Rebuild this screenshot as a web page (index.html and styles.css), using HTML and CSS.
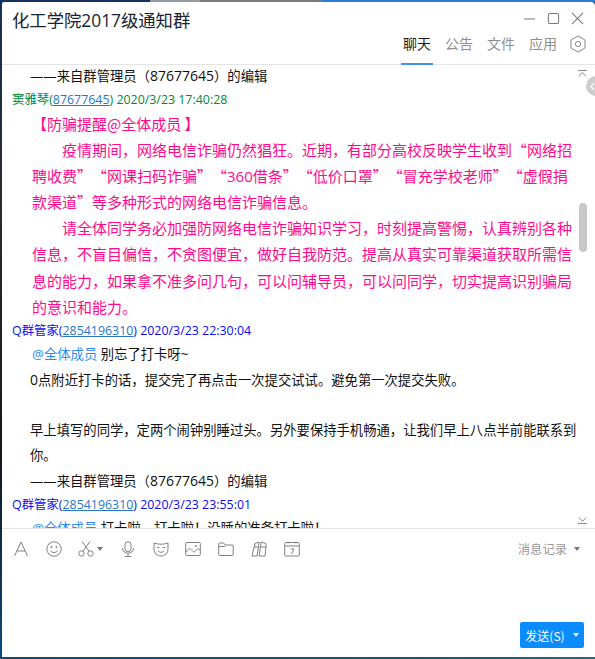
FILE: index.html
```html
<!DOCTYPE html>
<html lang="zh-CN">
<head>
<meta charset="utf-8">
<title>化工学院2017级通知群</title>
<link rel="stylesheet" href="styles.css">
</head>
<body>
<div class="window">
  <header class="head">
    <h1 class="title">化工学院2017级通知群</h1>
    <div class="head-right">
      <div class="winbtns">
        <svg class="wb" viewBox="0 0 14 14"><path d="M1 7.500h12" /></svg>
        <svg class="wb" viewBox="0 0 14 14"><rect x="1.500" y="1.500" width="11" height="11" rx="1.500" /></svg>
        <svg class="wb" viewBox="0 0 14 14"><path d="M1 1l12 12M13 1L1 13" /></svg>
      </div>
      <nav class="tabs">
        <span class="tab active">聊天</span>
        <span class="tab">公告</span>
        <span class="tab">文件</span>
        <span class="tab">应用</span>
        <svg class="hex" viewBox="0 0 16 18"><path d="M8 1l7 4v8l-7 4-7-4V5z" /><circle cx="8" cy="9" r="2.600" /></svg>
      </nav>
    </div>
  </header>
  <main class="chat">
    <div class="scroll">
      <p class="line edit">——来自群管理员（<span class="num">87677645</span>）的编辑</p>
      <p class="meta green">窦雅琴(<u class="uid">87677645</u>) 2020/3/23 17:40:28</p>
      <div class="pink">
        <p class="alert">【防骗提醒@全体成员 】</p>
        <p class="para">疫情期间，网络电信诈骗仍然猖狂。近期，有部分高校反映学生收到“网络招聘收费”“网课扫码诈骗”“<span class="num">360</span>借条”“低价口罩”“冒充学校老师”“虚假捐款渠道”等多种形式的网络电信诈骗信息。</p>
        <p class="para">请全体同学务必加强防网络电信诈骗知识学习，时刻提高警惕，认真辨别各种信息，不盲目偏信，不贪图便宜，做好自我防范。提高从真实可靠渠道获取所需信息的能力，如果拿不准多问几句，可以问辅导员，可以问同学，切实提高识别骗局的意识和能力。</p>
      </div>
      <p class="meta blue">Q群管家(<u class="uid">2854196310</u>) 2020/3/23 22:30:04</p>
      <p class="line at-line"><span class="at">@全体成员</span> 别忘了打卡呀~</p>
      <p class="line body"><span class="num">0</span>点附近打卡的话，提交完了再点击一次提交试试。避免第一次提交失败。</p>
      <p class="line body">&nbsp;</p>
      <p class="line body">早上填写的同学，定两个闹钟别睡过头。另外要保持手机畅通，让我们早上八点半前能联系到你。</p>
      <p class="line edit">——来自群管理员（<span class="num">87677645</span>）的编辑</p>
      <p class="meta blue">Q群管家(<u class="uid">2854196310</u>) 2020/3/23 23:55:01</p>
      <p class="line at-line"><span class="at">@全体成员</span> 打卡啦，打卡啦！没睡的准备打卡啦！</p>
    </div>
    <svg class="arrow arrow-up" viewBox="0 0 9 7"><path d="M0 .500h9M1 6.500l3.500-4 3.500 4" /></svg>
    <svg class="arrow arrow-down" viewBox="0 0 9 7"><path d="M0 6.500h9M1 .5l3.500 4 3.500-4" /></svg>
    <div class="thumb"></div>
    <div class="side-tab"><svg class="side-icon" viewBox="0 0 6 10"><path d="M5 1L1 5l4 4" /></svg></div>
  </main>
  <section class="toolbar">
    <div class="tools">
      <svg class="ti" viewBox="0 0 16 16"><path d="M1.500 15L8 1l6.500 14M4 10h8" /></svg>
      <svg class="ti" viewBox="0 0 16 16"><circle cx="8" cy="8" r="7.200" /><path d="M4.600 9.600c1.600 2.600 5.200 2.600 6.800 0" /><circle cx="5.500" cy="6" r=".7" /><circle cx="10.500" cy="6" r=".7" /></svg>
      <span class="scissors">
        <svg class="ti" viewBox="0 0 16 16"><circle cx="3.500" cy="12.500" r="2.700" /><circle cx="12.500" cy="12.500" r="2.700" /><path d="M5 10.200L12 .5M11 10.200L4 .5" /></svg>
        <i class="caret caret-grey"></i>
      </span>
      <svg class="ti" viewBox="0 0 16 16"><rect x="5" y=".7" width="6" height="10" rx="3" /><path d="M2.500 7c0 7 11 7 11 0M8 12.500v3M5 15.500h6" /></svg>
      <svg class="ti" viewBox="0 0 16 16"><path d="M1 2c4 1.600 10 1.600 14 0v6c0 4-3 7-7 7s-7-3-7-7z" /><path d="M4 6.500h2.400M9.600 6.500H12M5 10c1.600 1.800 4.400 1.800 6 0" /></svg>
      <svg class="ti" viewBox="0 0 16 16"><rect x=".7" y="1.500" width="14.600" height="13" rx="1" /><path d="M1 11c2.500-4 4-4 6-1.500s3.500 1 4.500-.5 2.500-1 3.500 0" /><circle cx="11" cy="5" r=".6" /></svg>
      <svg class="ti" viewBox="0 0 16 16"><path d="M.7 13.500V3a1 1 0 0 1 1-1h4l1.500 2h7a1 1 0 0 1 1 1v8.500a1 1 0 0 1-1 1H1.700a1 1 0 0 1-1-1zM1 5.500h6" /></svg>
      <svg class="ti" viewBox="0 0 16 16"><path d="M3 6h4.500L6 15H1zM9.500 6H15l-1 9H8zM3.500 6L4 2.500 8 1 7.500 6M9.500 6L10 1l5 1.500V6" /></svg>
      <svg class="ti" viewBox="0 0 16 16"><rect x=".7" y="1.500" width="14.600" height="13.500" rx="1" /><path d="M1 5h14M4 .5v2M12 .5v2M6.500 8H10L7.500 13" /></svg>
    </div>
    <div class="history">消息记录<i class="caret caret-grey"></i></div>
  </section>
  <section class="input">
    <button class="send" type="button">发送(S)<i class="caret caret-white"></i></button>
  </section>
</div>
</body>
</html>
```
FILE: styles.css
```css
* { box-sizing: border-box; }
html, body { margin: 0; height: 100%; }
body {
  width: 595px;
  height: 659px;
  overflow: hidden;
  background:
    linear-gradient(90deg, #16305f 0 150px, #8f9aa3 150px 200px, #7c7a7c 200px 322px, #2a7cd6 322px) top / 100% 2px no-repeat,
    linear-gradient(90deg, #0d4a7a, #0f5a78 70%, #1b6a88) bottom / 100% 2px no-repeat,
    linear-gradient(180deg, #16305f, #2b2b2b 30%, #14181f 70%, #0d4a7a);
  padding: 2px 0 2px 2px;
  font-family: "Open Sans", "Noto Sans CJK SC", sans-serif;
}
p { margin: 0; }
.window {
  height: 655px;
  background: #fff;
  display: flex;
  flex-direction: column;
  border-radius: 2px 4px 0 0;
}
.head {
  height: 63px;
  flex: none;
  display: flex;
  justify-content: space-between;
  border-bottom: 1px solid #e5e5e5;
  padding-left: 10px;
}
.title {
  margin: 6px 0 0;
  font-size: 17.330px;
  line-height: 24px;
  font-weight: 400;
  color: #1a2430;
}
.head-right {
  display: flex;
  flex-direction: column;
  align-items: flex-end;
}
.winbtns {
  display: flex;
  gap: 11px;
  margin: 10px 11px 0 0;
}
.wb { width: 13px; height: 13px; fill: none; stroke: #777; stroke-width: 1.100; }
.tabs {
  display: flex;
  align-items: flex-start;
  margin: 9px 9px 0 0;
}
.tab {
  width: 42px;
  height: 31px;
  text-align: center;
  font-size: 14px;
  line-height: 20px;
  color: #8f8f8f;
  white-space: nowrap;
}
.tab.active { color: #1a1a1a; border-bottom: 2px solid #3f94f0; width: 32px; margin: 0 5px; }
.hex { width: 16px; height: 18px; margin: 1px 0 0 6px; fill: none; stroke: #888; stroke-width: 1; }
.chat {
  position: relative;
  flex: none;
  height: 464px;
  overflow: hidden;
  border-bottom: 1px solid #e5e5e5;
}
.scroll {
  margin-top: -2px;
  padding: 0 18px 0 10px;
  color: #111;
}
.num { font-family: "Open Sans", sans-serif; font-size: 14px; }
.line { font-size: 13.330px; line-height: 25px; }
.edit { padding-left: 18px; }
.meta { font-size: 12.400px; line-height: 22px; white-space: nowrap; }
.uid { color: #2a76c4; }
.green { color: #00893a; }
.blue { color: #0b0bf0; }
.pink {
  color: #ff0a8c;
  font-family: "Noto Sans CJK SC", sans-serif;
  font-size: 15px;
  line-height: 26.100px;
  padding-left: 20px;
  text-spacing-trim: space-all;
}
.para { text-indent: 30px; }
.pink .num { font-size: 15px; }
.at-line { padding-left: 20px; }
.at { color: #2d8cf0; }
.body { padding-left: 18px; }
.arrow { position: absolute; right: 8px; width: 9px; height: 7px; fill: none; stroke: #888; stroke-width: 1; }
.arrow-up { top: 5px; }
.arrow-down { bottom: 4px; }
.thumb { position: absolute; right: 8px; top: 138px; width: 8px; height: 49px; background: #c8c8c8; border-radius: 4px; }
.side-tab {
  position: absolute;
  right: -9px;
  top: 11px;
  width: 18px;
  height: 20px;
  border-radius: 10px 0 0 10px;
  background: #cdcdcd;
  display: flex;
  align-items: center;
  padding-left: 4px;
}
.side-icon { width: 5px; height: 9px; fill: none; stroke: #fff; stroke-width: 1.500; }
.toolbar {
  height: 40px;
  flex: none;
  display: flex;
  align-items: center;
  justify-content: space-between;
  padding: 0 15px 0 11px;
}
.tools { display: flex; align-items: center; gap: 16.700px; }
.ti { width: 16px; height: 16px; fill: none; stroke: #808080; stroke-width: 1; display: block; }
.scissors { display: flex; align-items: center; gap: 3px; }
.caret { display: inline-block; width: 0; height: 0; border-left: 3.500px solid transparent; border-right: 3.500px solid transparent; }
.caret-grey { border-top: 4px solid #777; }
.caret-white { border-top: 4px solid #fff; margin-left: 8px; }
.history { font-size: 12.300px; color: #999; display: flex; align-items: center; gap: 7px; }
.input {
  flex: 1;
  display: flex;
  justify-content: flex-end;
  align-items: flex-end;
  padding: 0 11px 9px 0;
}
.send {
  width: 64px;
  height: 26px;
  border: 0;
  border-radius: 2px;
  background: #0a8cff;
  color: #fff;
  font: 12px "Noto Sans CJK SC", sans-serif;
  padding: 0;
  display: flex;
  align-items: center;
  justify-content: center;
}
```
